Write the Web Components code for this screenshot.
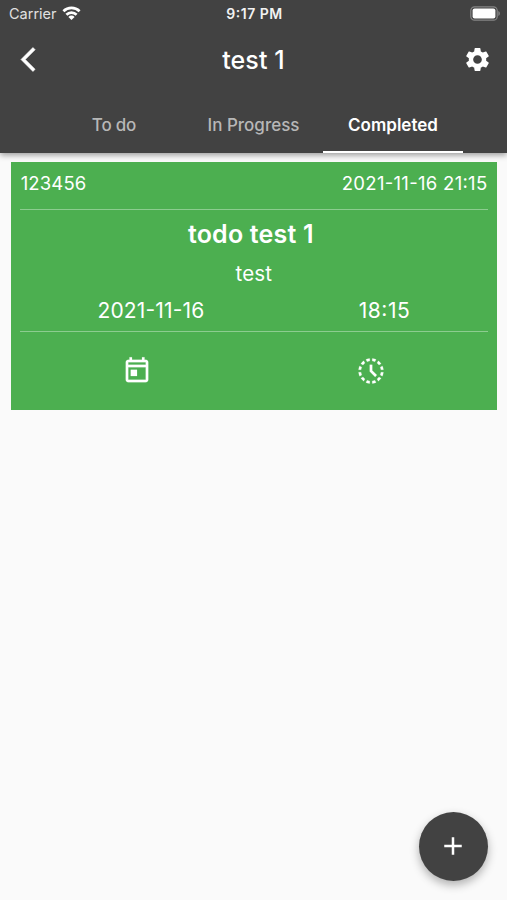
<!DOCTYPE html>
<html lang="en">
<head>
<meta charset="utf-8">
<title>test 1</title>
<style>
    body {
        margin: 0;
        background: #fafafa;
        font-family: Inter, "Liberation Sans", sans-serif;
    }
</style>
</head>
<body>
<todo-screen>
    <status-bar slot="header" carrier="Carrier" time="9:17 PM"></status-bar>
    <nav-bar slot="header">test 1</nav-bar>
    <tab-bar slot="header">
        <tab-item style="--spacing: -0.2px">To do</tab-item>
        <tab-item>In Progress</tab-item>
        <tab-item active>Completed</tab-item>
    </tab-bar>
    <todo-card code="123456" created="2021-11-16 21:15" name="todo test 1" description="test" date="2021-11-16" time="18:15"></todo-card>
    <add-button slot="action"></add-button>
</todo-screen>
<script>
    const icons = {
        back: 'M11.67 3.87L9.9 2.1 0 12l9.9 9.9 1.77-1.77L3.54 12z',
        settings: 'M19.14 12.94c.04-.3.06-.61.06-.94 0-.32-.02-.64-.07-.94l2.03-1.58c.18-.14.23-.41.12-.61l-1.92-3.32c-.12-.22-.37-.29-.59-.22l-2.39.96c-.5-.38-1.03-.7-1.62-.94l-.36-2.54c-.04-.24-.24-.41-.48-.41h-3.84c-.24 0-.43.17-.47.41l-.36 2.54c-.59.24-1.13.57-1.62.94l-2.39-.96c-.22-.08-.47 0-.59.22L2.74 8.87c-.12.21-.08.47.12.61l2.03 1.58c-.05.3-.09.63-.09.94s.02.64.07.94l-2.03 1.58c-.18.14-.23.41-.12.61l1.92 3.32c.12.22.37.29.59.22l2.39-.96c.5.38 1.03.7 1.62.94l.36 2.54c.05.24.24.41.48.41h3.84c.24 0 .44-.17.47-.41l.36-2.54c.59-.24 1.13-.56 1.62-.94l2.39.96c.22.08.47 0 .59-.22l1.92-3.32c.12-.22.07-.47-.12-.61l-2.01-1.58zM12 15.6c-1.98 0-3.6-1.62-3.6-3.6s1.62-3.6 3.6-3.6 3.6 1.62 3.6 3.6-1.62 3.6-3.6 3.6z',
        today: 'M19 3h-1V1h-2v2H8V1H6v2H5c-1.11 0-1.99.9-1.99 2L3 19c0 1.1.89 2 2 2h14c1.1 0 2-.9 2-2V5c0-1.1-.9-2-2-2zm0 16H5V9h14v10zm0-12H5V5h14v2zM7 11h5v5H7z',
        clock: 'M15.1 19.37l1 1.74c-.96.44-2.01.73-3.1.84v-2.02c.74-.09 1.44-.28 2.1-.56zM4.07 13H2.05c.11 1.1.4 2.14.84 3.1l1.74-1c-.28-.66-.47-1.36-.56-2.1zM15.1 4.63l1-1.74c-.96-.44-2-.73-3.1-.84v2.02c.74.09 1.44.28 2.1.56zM19.93 11h2.02c-.11-1.1-.4-2.14-.84-3.1l-1.74 1c.28.66.47 1.36.56 2.1zM8.9 19.37l-1 1.74c.96.44 2.01.73 3.1.84v-2.02c-.74-.09-1.44-.28-2.1-.56zM11 4.07V2.05c-1.1.11-2.14.4-3.1.84l1 1.74c.66-.28 1.36-.47 2.1-.56zM18.36 7.17l1.74-1.01c-.63-.87-1.4-1.64-2.27-2.27l-1.01 1.74c.59.45 1.1.96 1.54 1.54zM4.63 8.9l-1.74-1c-.44.96-.73 2-.84 3.1h2.02c.09-.74.28-1.44.56-2.1zM19.93 13c-.09.74-.28 1.44-.56 2.1l1.74 1c.44-.96.73-2.01.84-3.1h-2.02zM16.83 18.36l1.01 1.74c.87-.63 1.64-1.4 2.27-2.27l-1.74-1.01c-.45.59-.96 1.1-1.54 1.54zM7.17 5.64L6.17 3.89c-.87.63-1.64 1.4-2.27 2.27l1.74 1.01c.44-.59.95-1.1 1.53-1.53zM5.64 16.83L3.9 17.83c.63.87 1.4 1.64 2.27 2.27l1.01-1.74c-.59-.44-1.1-.95-1.54-1.53zM13 7h-2v5.41l4.29 4.29 1.41-1.41-3.7-3.7V7z',
        add: 'M19 13h-6v6h-2v-6H5v-2h6V5h2v6h6v2z'
    };

    class MdIcon extends HTMLElement {
        constructor(){
            super();
            this._shadowRoot = this.attachShadow({ mode: 'open' });
        }
        connectedCallback(){
            this._shadowRoot.innerHTML = `
            <style>
                :host { display: block; flex: none; width: var(--size, 30px); height: var(--size, 30px); }
                svg { display: block; width: 100%; height: 100%; fill: currentColor; stroke: currentColor; stroke-width: var(--weight, 0); overflow: visible; }
            </style>
            <svg viewBox="0 0 24 24"><path d="${icons[this.getAttribute('name')]}"/></svg>
            `;
        }
    }

    class TodoScreen extends HTMLElement {
        constructor(){
            super();
            this._shadowRoot = this.attachShadow({ mode: 'open' });
        }
        connectedCallback(){
            this._shadowRoot.innerHTML = `
            <style>
                :host { display: flex; flex-direction: column; height: 900px; overflow: hidden; }
                header {
                    display: flex;
                    flex-direction: column;
                    flex: none;
                    height: 152.5px;
                    background: #424242;
                    color: #fff;
                    box-shadow: 0 2px 6px rgba(0, 0, 0, .4);
                }
                main { flex: 1; padding: 9.5px 10px 0 10.7px; }
                footer { display: flex; justify-content: flex-end; padding: 0 19.5px 19.5px 0; }
            </style>
            <header><slot name="header"></slot></header>
            <main><slot></slot></main>
            <footer><slot name="action"></slot></footer>
            `;
        }
    }

    class StatusBar extends HTMLElement {
        constructor(){
            super();
            this._shadowRoot = this.attachShadow({ mode: 'open' });
        }
        connectedCallback(){
            this._shadowRoot.innerHTML = `
            <style>
                :host {
                    display: grid;
                    grid-template-columns: 1fr auto 1fr;
                    align-items: center;
                    height: 27px;
                    padding: 0 7px 0 9px;
                    font-size: 14.5px;
                    color: #e0e0e0;
                }
                .carrier { display: flex; align-items: center; gap: 5px; }
                .time {
                    font-size: 14px;
                    font-weight: 600;
                    font-feature-settings: "case";
                    letter-spacing: .5px;
                    color: #f2f2f2;
                }
                .wifi { width: 19px; height: 14px; margin-top: -1px; }
                .battery { width: 30px; height: 15px; justify-self: end; }
            </style>
            <div class="carrier">
                <span>${this.getAttribute('carrier')}</span>
                <svg class="wifi" viewBox="0 0 18 14" fill="none" stroke="#fff" stroke-width="2.7">
                    <path d="M.9 5.2a11.6 11.6 0 0 1 16.2 0M3.9 8.7a7.2 7.2 0 0 1 10.2 0"/>
                    <path d="M9 14L5.9 10.9a4.3 4.3 0 0 1 6.2 0z" fill="#fff" stroke="none"/>
                </svg>
            </div>
            <div class="time">${this.getAttribute('time')}</div>
            <svg class="battery" viewBox="0 0 30 15">
                <rect x=".8" y=".8" width="26.4" height="13.4" rx="3.8" fill="none" stroke="#858585" stroke-width="1.2"/>
                <rect x="2.6" y="2.6" width="22.8" height="9.8" rx="2" fill="#fff"/>
                <path d="M28.3 5v5c1-.4 1.6-1.3 1.6-2.5S29.3 5.4 28.3 5z" fill="#858585"/>
            </svg>
            `;
        }
    }

    class NavBar extends HTMLElement {
        constructor(){
            super();
            this._shadowRoot = this.attachShadow({ mode: 'open' });
        }
        connectedCallback(){
            this._shadowRoot.innerHTML = `
            <style>
                :host {
                    display: grid;
                    grid-template-columns: 1fr auto 1fr;
                    align-items: center;
                    height: 65px;
                    padding: 0 15px;
                    --size: 29px;
                }
                h1 { margin: 0; font-size: 25px; font-weight: 500; line-height: 30px; letter-spacing: .1px; }
                .left { margin-left: 6px; --weight: .5; }
                .right { justify-self: end; }
            </style>
            <md-icon class="left" name="back"></md-icon>
            <h1><slot></slot></h1>
            <md-icon class="right" name="settings"></md-icon>
            `;
        }
    }

    class TabBar extends HTMLElement {
        constructor(){
            super();
            this._shadowRoot = this.attachShadow({ mode: 'open' });
        }
        connectedCallback(){
            this._shadowRoot.innerHTML = `
            <style>
                :host { display: flex; flex: 1; justify-content: center; }
            </style>
            <slot></slot>
            `;
        }
    }

    class TabItem extends HTMLElement {
        constructor(){
            super();
            this._shadowRoot = this.attachShadow({ mode: 'open' });
        }
        connectedCallback(){
            this._shadowRoot.innerHTML = `
            <style>
                :host {
                    display: flex;
                    align-items: center;
                    justify-content: center;
                    box-sizing: border-box;
                    width: 139.5px;
                    padding-top: 8px;
                    border-bottom: 2.6px solid transparent;
                    color: #b7b7b7;
                    font-size: 17px;
                    font-weight: 500;
                    letter-spacing: var(--spacing, normal);
                }
                :host([active]) { color: #fff; border-color: #fff; font-weight: 600; }
            </style>
            <slot></slot>
            `;
        }
    }

    class TodoCard extends HTMLElement {
        constructor(){
            super();
            this._shadowRoot = this.attachShadow({ mode: 'open' });
        }
        connectedCallback(){
            this._shadowRoot.innerHTML = `
            <style>
                :host {
                    display: block;
                    box-sizing: border-box;
                    height: 247.8px;
                    padding: 0 9.5px;
                    background: #4caf50;
                    color: #fff;
                }
                .top {
                    display: flex;
                    justify-content: space-between;
                    height: 47px;
                    box-sizing: border-box;
                    padding: 8.5px 0 0 .5px;
                    font-size: 18.5px;
                    line-height: 24px;
                    font-feature-settings: "case";
                    letter-spacing: .15px;
                }
                .top span:last-child { letter-spacing: .3px; }
                .body { height: 121px; border: solid rgba(255, 255, 255, .36); border-width: 1.4px 0; }
                h3 {
                    margin: 8px 0 0;
                    padding-right: 6px;
                    font-size: 25px;
                    line-height: 32px;
                    font-weight: 600;
                    letter-spacing: .2px;
                    text-align: center;
                }
                p { margin: 10px 0 0; font-size: 20.5px; line-height: 28px; letter-spacing: .2px; text-align: center; }
                .row { display: flex; justify-content: space-around; }
                .when { margin-top: 9px; font-size: 21px; line-height: 28px; font-feature-settings: "case"; letter-spacing: .15px; }
                .when span:last-child { letter-spacing: .5px; }
                .icons { margin-top: 24px; --weight: .15; }
            </style>
            <div class="top">
                <span>${this.getAttribute('code')}</span>
                <span>${this.getAttribute('created')}</span>
            </div>
            <div class="body">
                <h3>${this.getAttribute('name')}</h3>
                <p>${this.getAttribute('description')}</p>
                <div class="row when">
                    <span>${this.getAttribute('date')}</span>
                    <span>${this.getAttribute('time')}</span>
                </div>
            </div>
            <div class="row icons">
                <md-icon name="today"></md-icon>
                <md-icon name="clock"></md-icon>
            </div>
            `;
        }
    }

    class AddButton extends HTMLElement {
        constructor(){
            super();
            this._shadowRoot = this.attachShadow({ mode: 'open' });
        }
        connectedCallback(){
            this._shadowRoot.innerHTML = `
            <style>
                button {
                    display: flex;
                    align-items: center;
                    justify-content: center;
                    width: 69px;
                    height: 69px;
                    padding: 0;
                    border: 0;
                    border-radius: 50%;
                    background: #424242;
                    color: #fff;
                    box-shadow: 0 4px 10px rgba(0, 0, 0, .3);
                }
            </style>
            <button aria-label="Add"><md-icon name="add"></md-icon></button>
            `;
        }
    }

    window.customElements.define('md-icon', MdIcon);
    window.customElements.define('todo-screen', TodoScreen);
    window.customElements.define('status-bar', StatusBar);
    window.customElements.define('nav-bar', NavBar);
    window.customElements.define('tab-bar', TabBar);
    window.customElements.define('tab-item', TabItem);
    window.customElements.define('todo-card', TodoCard);
    window.customElements.define('add-button', AddButton);
</script>
</body>
</html>
